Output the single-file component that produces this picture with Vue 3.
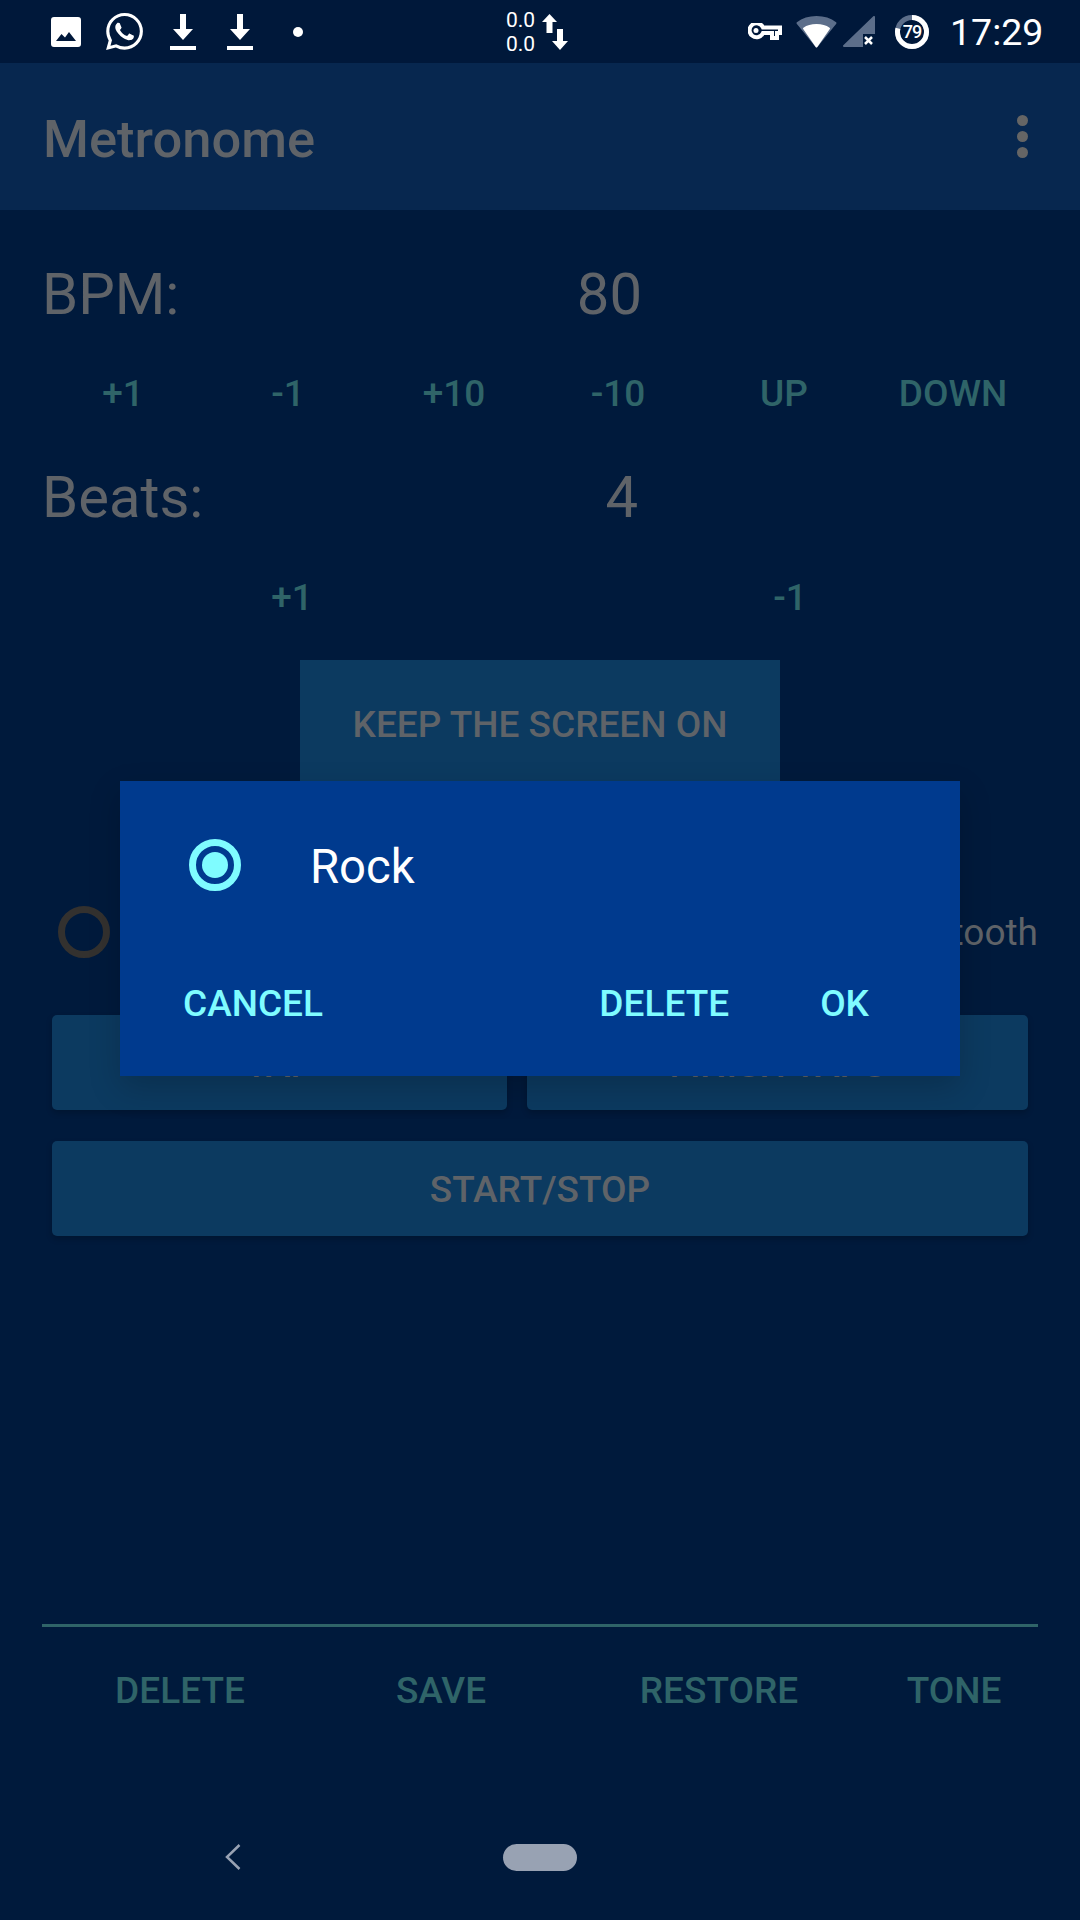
<template>
  <div class="screen">
    <!-- status bar -->
    <div class="status-bar">
      <div class="status-left">
        <svg class="ic-image" viewBox="0 0 30 30">
          <path fill="#fff" fill-rule="evenodd" d="M3 0h24a3 3 0 0 1 3 3v24a3 3 0 0 1-3 3H3a3 3 0 0 1-3-3V3a3 3 0 0 1 3-3zM5 24l5.500-7 3.500 3.500 4-5.500L25 24z" />
        </svg>
        <svg class="ic-whatsapp" viewBox="0 0 24 24">
          <path fill="#fff" d="M17.472 14.382c-.297-.149-1.758-.867-2.03-.967-.273-.099-.471-.148-.67.15-.197.297-.767.966-.94 1.164-.173.199-.347.223-.644.075-.297-.15-1.255-.463-2.39-1.475-.883-.788-1.48-1.761-1.653-2.059-.173-.297-.018-.458.13-.606.134-.133.298-.347.446-.52.149-.174.198-.298.298-.497.099-.198.05-.371-.025-.52-.075-.149-.669-1.612-.916-2.207-.242-.579-.487-.5-.669-.51-.173-.008-.371-.01-.57-.01-.198 0-.52.074-.792.372-.272.297-1.04 1.016-1.04 2.479 0 1.462 1.065 2.875 1.213 3.074.149.198 2.096 3.2 5.077 4.487.709.306 1.262.489 1.694.625.712.227 1.36.195 1.871.118.571-.085 1.758-.719 2.006-1.413.248-.694.248-1.289.173-1.413-.074-.124-.272-.198-.57-.347m-5.421 7.403h-.004a9.87 9.87 0 01-5.031-1.378l-.361-.214-3.741.982.998-3.648-.235-.374a9.86 9.86 0 01-1.51-5.26c.001-5.45 4.436-9.884 9.888-9.884 2.64 0 5.122 1.03 6.988 2.898a9.825 9.825 0 012.893 6.994c-.003 5.45-4.437 9.884-9.885 9.884m8.413-18.297A11.815 11.815 0 0012.05 0C5.495 0 .16 5.335.157 11.892c0 2.096.547 4.142 1.588 5.945L.057 24l6.305-1.654a11.882 11.882 0 005.683 1.448h.005c6.554 0 11.89-5.335 11.893-11.893a11.821 11.821 0 00-3.48-8.413z" />
        </svg>
        <svg v-for="n in 2" :key="n" class="ic-download" viewBox="0 0 26 36">
          <path fill="#fff" d="M10 0h6v15h7L13 26 3 15h7zM0 32h26v4H0z" />
        </svg>
        <span class="dot"></span>
      </div>
      <div class="net-speed">
        <div class="net-text"><span>0.0</span><span>0.0</span></div>
        <svg class="ic-arrows" viewBox="0 0 26 37">
          <path fill="#fff" d="M7.500 1L15 9h-4.500v11h-6V9H0z" />
          <path fill="#fff" d="M15 16h6v12h5l-8 9-8-9h5z" />
        </svg>
      </div>
      <div class="status-right">
        <svg class="ic-key" viewBox="0 0 34 18">
          <path fill="none" stroke="#fff" stroke-width="4" d="M15 4.500h17v5.500h-3v5h-5v-5h-9A7 7 0 1 1 15 4.500z" />
          <circle cx="8" cy="7.500" r="2.500" fill="#fff" />
        </svg>
        <svg class="ic-wifi" viewBox="0 0 41 32">
          <path fill="#5c6e8a" stroke="#5c6e8a" stroke-width="2" stroke-linejoin="round" d="M1.500 7C6 3.500 12.500 1 20.500 1s14.500 2.500 19 6L20.500 30.500z" />
          <path fill="#fff" stroke="#fff" stroke-width="2" stroke-linejoin="round" d="M8 12.500C11.500 10 15.500 9 20.500 9s9 1 12.500 3.500L20.500 30.500z" />
        </svg>
        <svg class="ic-signal" viewBox="0 0 32 31">
          <path fill="#5c6e8a" stroke="#5c6e8a" stroke-width="2" stroke-linejoin="round" d="M31 1v29H1z" />
          <path fill="#001a3c" d="M20 18h12v13H20z" />
          <path stroke="#fff" stroke-width="2.500" d="M22 21l7 7M29 21l-7 7" />
        </svg>
        <div class="battery">
          <svg viewBox="0 0 34 34">
            <circle cx="17" cy="17" r="14.500" fill="none" stroke="#5c6e8a" stroke-width="5" />
            <circle cx="17" cy="17" r="14.500" fill="none" stroke="#fff" stroke-width="5" pathLength="100" stroke-dasharray="79 100" transform="rotate(-90 17 17)" />
          </svg>
          <span>79</span>
        </div>
        <span class="clock">17:29</span>
      </div>
    </div>

    <!-- app bar -->
    <div class="app-bar">
      <span class="app-title">Metronome</span>
      <div class="overflow"><i></i><i></i><i></i></div>
    </div>

    <div class="content">
      <div class="stat stat-bpm"><span>BPM:</span><span>80</span></div>
      <div class="text-buttons six">
        <span v-for="b in bpmButtons" :key="b">{{ b }}</span>
      </div>
      <div class="stat stat-beats"><span>Beats:</span><span>4</span></div>
      <div class="text-buttons two">
        <span>+1</span>
        <span>-1</span>
      </div>

      <div class="keep-wrap">
        <div class="btn keep">KEEP THE SCREEN ON</div>
      </div>

      <div class="radio-row">
        <span class="radio-off"></span>
        <span class="bt-label">Bluetooth</span>
      </div>

      <div class="tap-row">
        <div class="btn round">TAP</div>
        <div class="btn round">FINISH TAPS</div>
      </div>
      <div class="btn round start">START/STOP</div>

      <div class="spacer"></div>

      <div class="divider"></div>
      <div class="bottom-buttons">
        <span>DELETE</span>
        <span>SAVE</span>
        <span>RESTORE</span>
        <span>TONE</span>
      </div>
    </div>

    <!-- nav bar -->
    <div class="nav-bar">
      <svg class="nav-back" viewBox="0 0 16 26">
        <path fill="none" stroke="#98a2b3" stroke-width="2.500" d="M14.500 1L2 13l12.500 12" />
      </svg>
      <span class="nav-pill"></span>
    </div>

    <!-- dialog -->
    <div class="dialog">
      <div class="dialog-item">
        <span class="radio-on"><i></i></span>
        <span class="item-label">Rock</span>
      </div>
      <div class="dialog-actions">
        <span>CANCEL</span>
        <span class="grow"></span>
        <span>DELETE</span>
        <span class="ok">OK</span>
      </div>
    </div>
  </div>
</template>

<script setup>
const bpmButtons = ['+1', '-1', '+10', '-10', 'UP', 'DOWN'];
</script>

<style>
html, body {
  margin: 0;
  background: #001a3c;
}
</style>

<style scoped>
.screen {
  position: relative;
  width: 1080px;
  height: 1920px;
  overflow: hidden;
  display: flex;
  flex-direction: column;
  background: #001a3c;
  font-family: Roboto, sans-serif;
  color: #5f6368;
}

/* status bar */
.status-bar {
  height: 63px;
  flex: none;
  display: flex;
  align-items: center;
  background: #00183a;
  color: #fff;
}
.status-left {
  width: 506px;
  padding-left: 51px;
  box-sizing: border-box;
  display: flex;
  align-items: center;
}
.ic-image { width: 30px; height: 30px; margin-right: 25px; }
.ic-whatsapp { width: 37px; height: 37px; margin-right: 27px; }
.ic-download { width: 26px; height: 36px; margin-right: 31px; }
.dot {
  width: 10px;
  height: 10px;
  border-radius: 50%;
  background: #fff;
  margin-left: 9px;
}
.net-speed {
  display: flex;
  align-items: center;
  width: 242px;
}
.net-text {
  display: flex;
  flex-direction: column;
  font-size: 21px;
  line-height: 24px;
  width: 36px;
}
.ic-arrows { width: 26px; height: 37px; }
.status-right {
  display: flex;
  align-items: center;
}
.ic-key { width: 34px; height: 18px; margin-right: 14px; }
.ic-wifi { width: 41px; height: 32px; margin-right: 6px; }
.ic-signal { width: 32px; height: 31px; margin-right: 20px; }
.battery {
  position: relative;
  width: 34px;
  height: 34px;
  margin-right: 21px;
}
.battery svg { width: 34px; height: 34px; display: block; }
.battery span {
  position: absolute;
  inset: 0;
  text-align: center;
  font-size: 18px;
  font-weight: 500;
  letter-spacing: -1px;
  line-height: 34px;
}
.clock {
  font-size: 37.5px;
  line-height: 40px;
}

/* app bar */
.app-bar {
  height: 147px;
  flex: none;
  display: flex;
  align-items: center;
  justify-content: space-between;
  padding: 0 52px 0 43px;
  background: #07274f;
}
.app-title {
  font-size: 52.5px;
  font-weight: 500;
  line-height: 62px;
  padding-top: 4px;
  color: #5f6368;
}
.overflow {
  display: flex;
  flex-direction: column;
  gap: 5px;
}
.overflow i {
  width: 11px;
  height: 11px;
  border-radius: 50%;
  background: #656565;
}

/* content */
.content {
  flex: 1;
  display: flex;
  flex-direction: column;
  padding: 0 42px;
}
.stat {
  display: flex;
  justify-content: space-between;
  font-size: 58px;
  line-height: 66px;
}
.stat-bpm { margin-top: 51px; padding-right: 396px; }
.stat-beats { margin-top: 48px; padding-right: 400px; }
.text-buttons {
  display: grid;
  font-size: 37px;
  font-weight: 500;
  line-height: 44px;
  color: #2f6468;
  text-align: center;
}
.six {
  grid-template-columns: 170px 160px 172px 156px 176px 162px;
  margin: 45px 4px 0 -4px;
}
.two {
  grid-template-columns: repeat(2, 1fr);
  margin: 46px -1px 0 1px;
}

.keep-wrap {
  display: flex;
  justify-content: center;
  margin-top: 40px;
}
.btn {
  display: flex;
  align-items: center;
  justify-content: center;
  box-sizing: border-box;
  padding-top: 2px;
  background: #0c3a60;
  font-size: 37px;
  font-weight: 500;
  color: #5f6368;
}
.keep {
  width: 480px;
  height: 127px;
}
.radio-row {
  display: flex;
  align-items: center;
  justify-content: space-between;
  height: 52px;
  margin-top: 119px;
  margin-left: 16px;
}
.radio-off {
  width: 52px;
  height: 52px;
  box-sizing: border-box;
  border: 7px solid #33312f;
  border-radius: 50%;
}
.bt-label {
  font-size: 37px;
}
.tap-row {
  display: flex;
  gap: 20px;
  margin: 57px 10px 0;
}
.round {
  height: 95px;
  border-radius: 5px;
  box-shadow: 0 3px 6px rgba(0, 0, 0, 0.2);
}
.tap-row .round { padding-top: 3px; }
.tap-row .round:first-child { width: 455px; }
.tap-row .round:last-child { flex: 1; }
.start {
  margin: 31px 10px 0;
}
.spacer { flex: 1; }
.divider {
  height: 3px;
  background: #2f6468;
}
.bottom-buttons {
  display: grid;
  grid-template-columns: 276px 246px 310px 160px;
  margin-top: 42px;
  margin-bottom: 81px;
  font-size: 37px;
  font-weight: 500;
  line-height: 44px;
  color: #2f6468;
  text-align: center;
}

/* nav bar */
.nav-bar {
  height: 126px;
  flex: none;
  position: relative;
  display: flex;
  align-items: center;
  justify-content: center;
}
.nav-back {
  position: absolute;
  left: 225px;
  top: 50px;
  width: 16px;
  height: 26px;
}
.nav-pill {
  width: 74px;
  height: 27px;
  border-radius: 14px;
  background: #98a2b3;
}

/* dialog */
.dialog {
  position: absolute;
  left: 120px;
  top: 781px;
  width: 840px;
  height: 295px;
  background: #003a8e;
  box-shadow: 0 12px 30px rgba(0, 0, 0, 0.18);
  display: flex;
  flex-direction: column;
}
.dialog-item {
  display: flex;
  align-items: flex-start;
  padding: 58px 0 0 69px;
}
.radio-on {
  width: 52px;
  height: 52px;
  box-sizing: border-box;
  border: 7px solid #7ffcff;
  border-radius: 50%;
  display: flex;
  align-items: center;
  justify-content: center;
}
.radio-on i {
  width: 26px;
  height: 26px;
  border-radius: 50%;
  background: #7ffcff;
}
.item-label {
  margin-left: 69px;
  font-size: 47.25px;
  color: #fff;
}
.dialog-actions {
  display: flex;
  align-items: center;
  margin-top: 87px;
  padding: 0 91px 0 63px;
  font-size: 37px;
  font-weight: 500;
  line-height: 44px;
  color: #7ffcff;
}
.grow { flex: 1; }
.ok { margin-left: 91px; }
</style>
